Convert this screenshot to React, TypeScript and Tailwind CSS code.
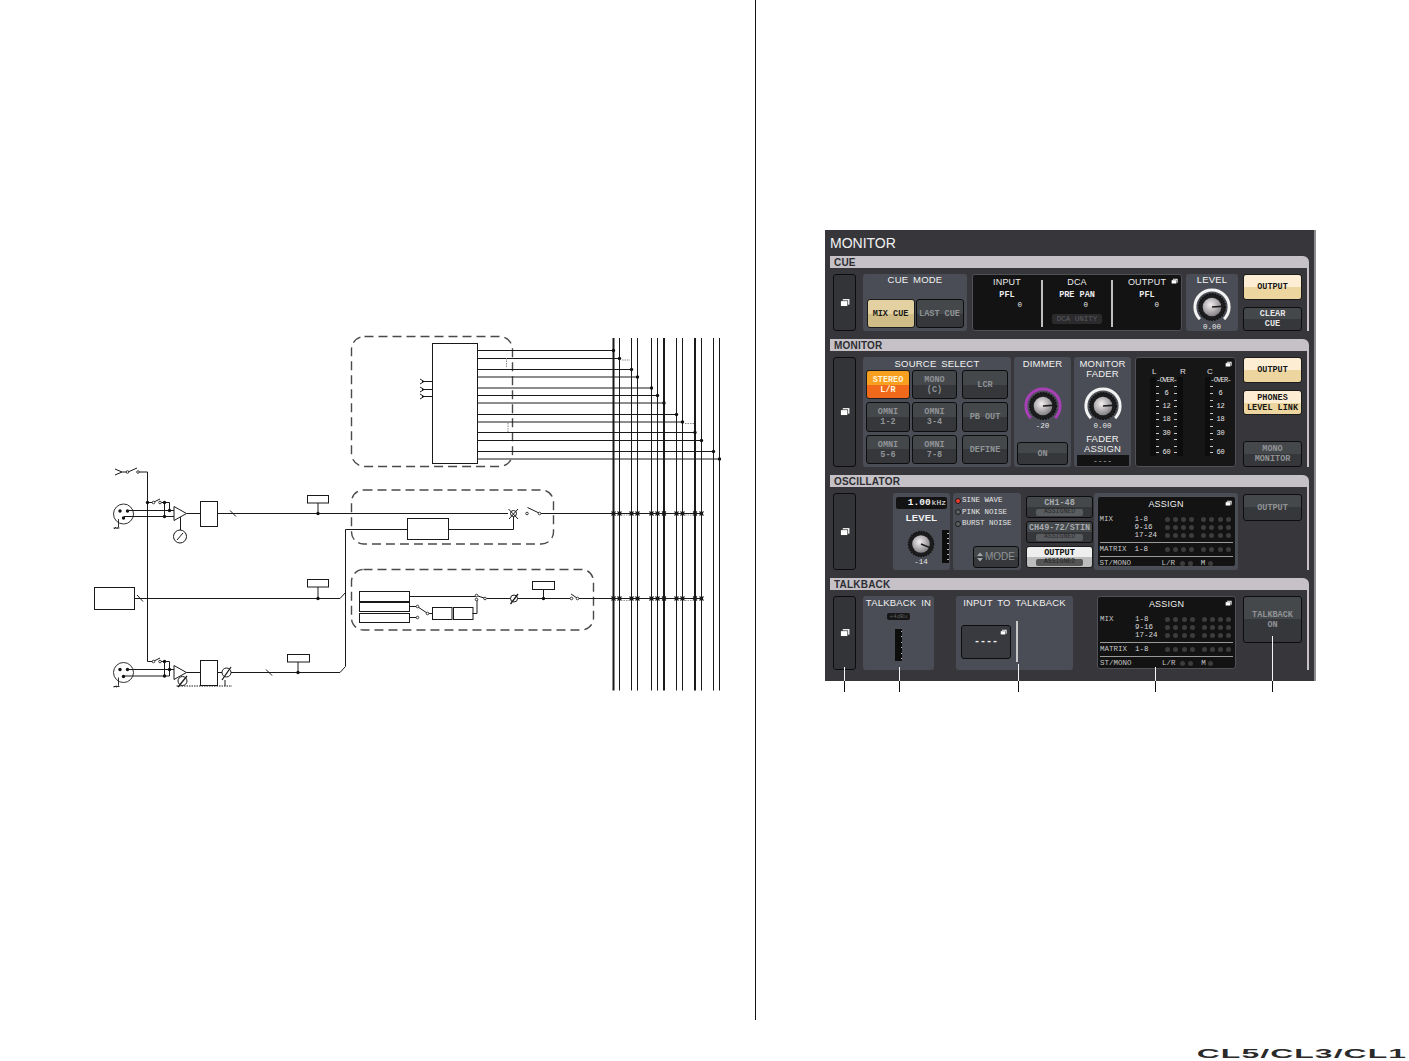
import type { ReactNode } from "react"

const MONO = "font-['Liberation_Mono',monospace]"

const TONES = {
  dark: "border-[#0d0d0d] bg-[linear-gradient(#45484b_50%,#35373a_50%)] text-[#e4e4e4]",
  dim: "border-[#0d0d0d] bg-[linear-gradient(#45484b_50%,#35373a_50%)] text-[#909396]",
  cream: "border-[#1c1c1c] bg-[linear-gradient(#fdeed3_50%,#edd5a0_50%)] text-[#161616]",
  sand: "border-[#1c1c1c] bg-[linear-gradient(#e3d1a1_50%,#cfbc87_50%)] text-[#1a1a1a]",
  orange: "border-[#1c1c1c] bg-[linear-gradient(#f7a01f_50%,#f0691b_50%)] text-[#fff4dc]",
  light: "border-[#1c1c1c] bg-[linear-gradient(#eeeeee_50%,#bdbdbd_50%)] text-[#111111]",
}

function Btn({
  tone = "dim",
  className = "",
  children,
}: {
  tone?: keyof typeof TONES
  className?: string
  children: ReactNode
}) {
  return (
    <div
      className={`flex flex-col items-center justify-center rounded-[3px] border text-[8.5px] leading-[10px] font-bold whitespace-nowrap ${MONO} ${TONES[tone]} ${className}`}
    >
      {children}
    </div>
  )
}

function WindowIcon({ size = 10 }: { size?: number }) {
  return (
    <svg width={size} height={size} viewBox="0 0 9 9" fill="none">
      <rect x="2.5" y="1" width="6" height="5" fill="#ffffff" />
      <rect x="0.5" y="2.5" width="6.5" height="5" fill="#ffffff" stroke="#222" strokeWidth="0.6" />
    </svg>
  )
}

function CornerIcon() {
  return (
    <div className="absolute top-[3px] right-[3px] flex">
      <WindowIcon size={7} />
    </div>
  )
}

function BigBtn() {
  return (
    <div className="flex h-full w-[23px] shrink-0 items-center justify-center rounded-[3px] border border-[#0d0d0d] bg-[#323437]">
      <WindowIcon />
    </div>
  )
}

function Group({ className = "", children }: { className?: string; children: ReactNode }) {
  return (
    <div className={`flex h-full shrink-0 flex-col items-center rounded-[3px] bg-[#4a4d55] ${className}`}>
      {children}
    </div>
  )
}

function Title({ children, className = "" }: { children: ReactNode; className?: string }) {
  return (
    <div className={`text-center text-[9.5px] leading-[10px] tracking-[0.2px] [word-spacing:2px] whitespace-nowrap text-[#f2f2f2] ${className}`}>
      {children}
    </div>
  )
}

function Knob({ id, ring, angle = 0, size = 38 }: { id: string; ring?: string; angle?: number; size?: number }) {
  const rad = (angle * Math.PI) / 180
  return (
    <svg width={size} height={size} viewBox="0 0 38 38" className="shrink-0">
      <defs>
        <radialGradient id={id} cx="0.42" cy="0.38" r="0.7">
          <stop offset="0" stopColor="#f2eff0" />
          <stop offset="0.45" stopColor="#bcb8bb" />
          <stop offset="1" stopColor="#77757a" />
        </radialGradient>
      </defs>
      {ring && (
        <path d="M6.9 31.1 A17.1 17.1 0 1 1 31.1 31.1" fill="none" stroke={ring} strokeWidth="3" />
      )}
      <circle cx="19" cy="19" r="13.2" fill="#1c1c1e" stroke="#111" strokeWidth="1.6" strokeDasharray="1.6 1.2" />
      <circle cx="19" cy="19" r="9.3" fill={`url(#${id})`} />
      <line
        x1="19"
        y1="19"
        x2={19 + 13 * Math.cos(rad)}
        y2={19 + 13 * Math.sin(rad)}
        stroke="#1a1a1a"
        strokeWidth="1.6"
      />
    </svg>
  )
}

function Value({ children, className = "" }: { children: ReactNode; className?: string }) {
  return <div className={`text-[7.5px] leading-[8px] text-[#e8e8e8] ${MONO} ${className}`}>{children}</div>
}

function CueColumn({ name, pfl, pad, last }: { name: string; pfl: string; pad: string; last?: boolean }) {
  return (
    <div className={`flex h-[47px] flex-1 flex-col items-center ${last ? "" : "border-r-2 border-[#bfbfbf]"}`}>
      <div className="-mt-[3px] text-[9px] leading-[10px] tracking-[0.2px] text-[#ececec]">{name}</div>
      <div className={`mt-[3px] text-[8.5px] leading-[10px] font-bold text-[#ececec] ${MONO}`}>{pfl}</div>
      <div className={`w-full text-right ${pad}`}>
        <Value className="mt-[1px]">0</Value>
      </div>
      {name === "DCA" && (
        <div className={`mt-[5px] rounded-[2px] bg-[#2b2b2d] px-[5px] text-[7.5px] leading-[10px] text-[#5c5c60] ${MONO}`}>
          DCA UNITY
        </div>
      )}
    </div>
  )
}

function Section({ title, contentClass, children }: { title: string; contentClass: string; children: ReactNode }) {
  return (
    <div className="w-[479px]">
      <div className="h-[12px] rounded-tr-[6px] bg-[#c5c1c6] pt-[1px] pl-[4px] text-[10px] leading-[12px] font-bold tracking-[0.2px] text-[#2e2e32]">
        {title}
      </div>
      <div className="border-r-2 border-[#c5c1c6] pt-[6px] pl-[3px]">
        <div className={`flex ${contentClass}`}>{children}</div>
      </div>
    </div>
  )
}

function MeterRows({ ticksBothSides }: { ticksBothSides?: boolean }) {
  const rows = ["-OVER-", "", "6", "", "12", "", "18", "", "30", "", "", "60"]
  return (
    <div className="flex w-[21px] flex-col">
      {rows.map((r, i) => (
        <div key={i} className="flex h-[6.8px] items-center justify-between text-[7px] leading-[7px] text-[#e8e8e8]">
          {r === "-OVER-" ? (
            <span className={`w-full text-center tracking-[-0.8px] ${MONO}`}>{r}</span>
          ) : (
            <>
              <span className="h-px w-[3px] bg-[#c8c8c8]" />
              <span className={`tracking-[-0.3px] ${MONO}`}>{r}</span>
              <span className={`h-px w-[3px] ${ticksBothSides ? "bg-[#c8c8c8]" : "bg-transparent"}`} />
            </>
          )}
        </div>
      ))}
    </div>
  )
}

function Dots({ n = 8 }: { n?: number }) {
  return (
    <div className="flex gap-[3.3px]">
      {Array.from({ length: n }).map((_, i) => (
        <span key={i} className={`size-[5px] rounded-full bg-[#3c3c3e] ${n === 8 && i === 4 ? "ml-[3.4px]" : ""}`} />
      ))}
    </div>
  )
}

function AssignRow({ label, sub }: { label: string; sub: string }) {
  return (
    <div className={`flex h-[8px] items-center text-[7.5px] leading-[8px] text-[#c4c4c4] ${MONO}`}>
      <span className="w-[35px] shrink-0">{label}</span>
      <span className="w-[30px] shrink-0 text-[#dcdcdc]">{sub}</span>
      <Dots />
    </div>
  )
}

function Assign({ className = "" }: { className?: string }) {
  return (
    <div className={`relative shrink-0 rounded-[3px] border border-[#4f5157] bg-[#131313] px-[2px] ${className}`}>
      <CornerIcon />
      <div className="pt-[2px] text-center text-[9px] leading-[10px] tracking-[0.2px] text-[#f0f0f0]">ASSIGN</div>
      <div className="mt-[6px]">
        <AssignRow label="MIX" sub="1-8" />
        <AssignRow label="" sub="9-16" />
        <AssignRow label="" sub="17-24" />
      </div>
      <div className="mt-[3px] h-px bg-[#9a9a9a]" />
      <div className="mt-[2px]">
        <AssignRow label="MATRIX" sub="1-8" />
      </div>
      <div className="mt-[3px] h-px bg-[#9a9a9a]" />
      <div className={`mt-[2px] flex h-[8px] items-center text-[7.5px] leading-[8px] text-[#c4c4c4] ${MONO}`}>
        <span className="w-[62px] shrink-0">ST/MONO</span>
        <span className="w-[18px] shrink-0">L/R</span>
        <Dots n={2} />
        <span className="ml-[8px] w-[7px]">M</span>
        <Dots n={1} />
      </div>
    </div>
  )
}

function Wave({ label, on }: { label: string; on?: boolean }) {
  return (
    <div className={`flex h-[11.5px] items-center gap-[1px] text-[7.5px] text-[#e6e6e6] ${MONO}`}>
      <span
        className={`size-[6px] rounded-full border border-[#1c1c1c] ${on ? "bg-[#ef3a2c]" : "bg-[#5c6060]"}`}
      />
      {label}
    </div>
  )
}

function AssignBtn({ name, tone = "dim" }: { name: string; tone?: "dim" | "light" }) {
  const light = tone === "light"
  return (
    <Btn tone={tone} className="h-[22px] w-full">
      <span className={light ? "" : "text-[#a8abae]"}>{name}</span>
      <span
        className={`mt-[1px] rounded-[2px] px-[8px] text-[6.5px] leading-[6.5px] font-normal ${
          light ? "bg-[#555] text-[#222]" : "bg-[#5a5d60] text-[#2a2a2c]"
        }`}
      >
        ASSIGNED
      </span>
    </Btn>
  )
}

function Callout({ className }: { className: string }) {
  return (
    <div className={`absolute flex w-px flex-col ${className}`}>
      <div className="flex-1 bg-[#f4f4f4]" />
      <div className="h-[11px] bg-[#111111]" />
    </div>
  )
}

function MonitorPanel() {
  return (
    <div className="relative h-[451px] w-[491px] border-r-2 border-[#8d8d92] bg-[#37373b] pl-[5px] font-['Liberation_Sans',sans-serif]">
      <div className="flex h-[26px] items-start pt-[5px] text-[14px] leading-[16px] text-[#f2f2f2]">MONITOR</div>

      <Section title="CUE" contentClass="h-[57px]">
        <BigBtn />
        <Group className="ml-[7px] w-[104px] pt-[1px]">
          <Title>CUE MODE</Title>
          <div className="mt-[14px] flex gap-[1px]">
            <Btn tone="sand" className="h-[29px] w-[48px]">MIX CUE</Btn>
            <Btn className="h-[29px] w-[48px]">LAST CUE</Btn>
          </div>
        </Group>
        <div className="relative ml-[5px] flex h-full w-[210px] shrink-0 items-start rounded-[3px] border border-[#4f5157] bg-[#131313] pt-[5px]">
          <CornerIcon />
          <CueColumn name="INPUT" pfl="PFL" pad="pr-[19px]" />
          <CueColumn name="DCA" pfl="PRE PAN" pad="pr-[23px]" />
          <CueColumn name="OUTPUT" pfl="PFL" pad="pr-[22px]" last />
        </div>
        <Group className="ml-[4px] w-[52px] pt-[1px]">
          <Title>LEVEL</Title>
          <div className="mt-[3px]">
            <Knob id="kLevel" ring="#f2f2f2" angle={-4} />
          </div>
          <Value className="-mt-[3px]">0.00</Value>
        </Group>
        <div className="ml-[5px] flex h-full w-[59px] shrink-0 flex-col justify-between">
          <Btn tone="cream" className="h-[26px]">OUTPUT</Btn>
          <Btn tone="dark" className="h-[24px]">
            <span>CLEAR</span>
            <span>CUE</span>
          </Btn>
        </div>
      </Section>

      <div className="mt-[8px]">
        <Section title="MONITOR" contentClass="h-[110px]">
          <BigBtn />
          <Group className="ml-[7px] w-[148px] pt-[2px]">
            <Title>SOURCE SELECT</Title>
            <div className="mt-[1px] grid grid-cols-[44px_45px_49px] grid-rows-[29px_30px_29px] gap-x-[2px] gap-y-[3px]">
              <Btn tone="orange">
                <span>STEREO</span>
                <span>L/R</span>
              </Btn>
              <Btn>
                <span>MONO</span>
                <span>(C)</span>
              </Btn>
              <Btn className="ml-[3px]">LCR</Btn>
              <Btn>
                <span>OMNI</span>
                <span>1-2</span>
              </Btn>
              <Btn>
                <span>OMNI</span>
                <span>3-4</span>
              </Btn>
              <Btn className="ml-[3px]">PB OUT</Btn>
              <Btn>
                <span>OMNI</span>
                <span>5-6</span>
              </Btn>
              <Btn>
                <span>OMNI</span>
                <span>7-8</span>
              </Btn>
              <Btn className="ml-[3px]">DEFINE</Btn>
            </div>
          </Group>
          <Group className="ml-[3px] w-[57px] pt-[2px]">
            <Title>DIMMER</Title>
            <div className="mt-[18px]">
              <Knob id="kDim" ring="#a640b4" angle={-4} />
            </div>
            <Value className="-mt-[3px]">-20</Value>
            <Btn className="mt-[12px] h-[23px] w-[51px]">ON</Btn>
          </Group>
          <Group className="ml-[3px] w-[57px] pt-[2px]">
            <Title>
              MONITOR
              <br />
              FADER
            </Title>
            <div className="mt-[8px]">
              <Knob id="kFader" ring="#f2f2f2" angle={-4} />
            </div>
            <Value className="-mt-[3px]">0.00</Value>
            <Title className="mt-[4px]">
              FADER
              <br />
              ASSIGN
            </Title>
            <div className={`mt-[1px] h-[11px] w-[52px] bg-[#131313] text-center text-[8px] leading-[11px] text-[#bdbdbd] ${MONO}`}>
              ----
            </div>
          </Group>
          <div className="relative ml-[4px] h-full w-[101px] shrink-0 rounded-[3px] border border-[#4f5157] bg-[#161616] pl-[14px]">
            <CornerIcon />
            <div className="flex h-[19px] pt-[9px] text-[8px] leading-[9px] text-[#e0e0e0]">
              <span className="ml-[2px] w-[28px]">L</span>
              <span className="w-[27px]">R</span>
              <span>C</span>
            </div>
            <div className="flex">
              <div className="flex h-[79px]">
                <div className="w-[6px] bg-[#0d0d0d]" />
                <MeterRows ticksBothSides />
                <div className="w-[6px] bg-[#0d0d0d]" />
              </div>
              <div className="ml-[22px] flex h-[79px]">
                <div className="w-[5px] bg-[#0d0d0d]" />
                <MeterRows />
              </div>
            </div>
          </div>
          <div className="ml-[7px] flex h-full w-[59px] shrink-0 flex-col">
            <Btn tone="cream" className="h-[26px]">OUTPUT</Btn>
            <Btn tone="cream" className="mt-[7px] h-[25px]">
              <span>PHONES</span>
              <span>LEVEL LINK</span>
            </Btn>
            <Btn className="mt-auto h-[26px]">
              <span>MONO</span>
              <span>MONITOR</span>
            </Btn>
          </div>
        </Section>
      </div>

      <div className="mt-[8px]">
        <Section title="OSCILLATOR" contentClass="h-[77px]">
          <BigBtn />
          <Group className="ml-[37px] w-[57px] pt-[4px]">
            <div className={`flex h-[12px] w-[51px] items-center justify-end gap-[1px] rounded-[2px] bg-[#131313] pr-[1px] font-bold text-[#f4f4f4] ${MONO}`}>
              <span className="text-[9.5px] leading-[12px]">1.00</span>
              <span className="text-[8px] leading-[12px] font-normal">kHz</span>
            </div>
            <Title className="mt-[4px] font-bold">LEVEL</Title>
            <div className="mt-[3px] flex w-full items-end pl-[10px]">
              <div className="flex flex-col items-center">
                <Knob id="kOsc" angle={22} size={36} />
                <Value className="-mt-[4px]">-14</Value>
              </div>
              <div className="mb-[3px] ml-[3px] flex h-[33px] w-[7px] flex-col items-end justify-between bg-[#0d0d0d] py-[3px]">
                {[0, 1, 2, 3, 4, 5].map((t) => (
                  <span key={t} className="h-px w-[2px] bg-[#bcbcbc]" />
                ))}
              </div>
            </div>
          </Group>
          <Group className="ml-[3px] w-[68px] items-start pt-[2px] pl-[2px]">
            <Wave label="SINE WAVE" on />
            <Wave label="PINK NOISE" />
            <Wave label="BURST NOISE" />
            <Btn tone="dim" className="mt-[16px] ml-[18px] h-[22px] w-[46px] !flex-row gap-[2px] font-['Liberation_Sans',sans-serif]! text-[10px]! font-normal!">
              <svg width="6" height="10" viewBox="0 0 6 10" fill="#a4a7aa">
                <path d="M3 0.5 L6 4 H0 Z M3 9.5 L6 6 H0 Z" />
              </svg>
              MODE
            </Btn>
          </Group>
          <div className="ml-[5px] flex h-full w-[67px] shrink-0 flex-col gap-[3px] pt-[3px]">
            <AssignBtn name="CH1-48" />
            <AssignBtn name="CH49-72/STIN" />
            <AssignBtn name="OUTPUT" tone="light" />
          </div>
          <div className="ml-[1px] flex h-full w-[144px] shrink-0 items-center justify-center rounded-[3px] bg-[#4a4d55]">
            <Assign className="h-[71px] w-[139px]" />
          </div>
          <div className="ml-[5px] w-[59px] shrink-0 pt-[1px]">
            <Btn className="h-[27px]">OUTPUT</Btn>
          </div>
        </Section>
      </div>

      <div className="mt-[8px]">
        <Section title="TALKBACK" contentClass="h-[74px]">
          <BigBtn />
          <Group className="ml-[7px] w-[71px] pt-[2px]">
            <Title>TALKBACK IN</Title>
            <div className={`mt-[5px] h-[7px] w-[23px] rounded-[2px] bg-[#161616] text-center text-[6px] leading-[7px] text-[#5a5a5e] ${MONO}`}>
              +4dBu
            </div>
            <div className="mt-[9px] flex h-[32px] w-[7px] flex-col items-end justify-between bg-[#0d0d0d] py-[2px]">
              {[0, 1, 2, 3, 4, 5].map((t) => (
                <span key={t} className="h-px w-[1px] bg-[#bcbcbc]" />
              ))}
            </div>
          </Group>
          <Group className="ml-[22px] w-[117px] items-start pt-[2px]">
            <Title className="w-full">INPUT TO TALKBACK</Title>
            <div className="mt-[13px] flex items-center pl-[5px]">
              <div className="relative flex h-[34px] w-[50px] items-center justify-center rounded-[3px] border border-[#0d0d0d] bg-[#383a3f] text-[10px] text-[#f0f0f0]">
                <CornerIcon />
                <span className={`font-bold ${MONO}`}>----</span>
              </div>
              <div className="ml-[5px] h-[41px] w-[2px] bg-[#c8c8c8]" />
            </div>
          </Group>
          <Assign className="ml-[24px] h-[73px] w-[139px]" />
          <div className="ml-[7px] w-[59px] shrink-0">
            <Btn className="h-[47px]">
              <span>TALKBACK</span>
              <span>ON</span>
            </Btn>
          </div>
        </Section>
      </div>

      <Callout className="top-[437px] left-[19px] h-[25px]" />
      <Callout className="top-[437px] left-[74px] h-[25px]" />
      <Callout className="top-[434px] left-[193px] h-[28px]" />
      <Callout className="top-[437px] left-[330px] h-[25px]" />
      <Callout className="top-[406px] left-[447px] h-[56px]" />
    </div>
  )
}

const BUSES = [613.5, 619.5, 631.5, 637.5, 651.5, 657.5, 664, 676.5, 682.5, 695, 701.5, 713.5, 719.5]
const THICK = [613.5, 664, 695]
const SENDS = [350.5, 358.5, 369.5, 377, 388, 395.5, 403, 414.5, 422, 432.5, 440.5, 451.5, 459]

function Node({ x, y }: { x: number; y: number }) {
  return <circle cx={x} cy={y} r="1.7" fill="#111" stroke="none" />
}

function Pin({ x, y }: { x: number; y: number }) {
  return <circle cx={x} cy={y} r="1.3" fill="#fff" stroke="#111" strokeWidth="0.8" />
}

function Xlr({ x, y }: { x: number; y: number }) {
  return (
    <g>
      <circle cx={x} cy={y} r="10" fill="#fff" strokeWidth="0.9" />
      <Node x={x - 3.5} y={y - 3} />
      <Node x={x + 4} y={y - 3} />
      <Node x={x} y={y + 4} />
      <path d={`M${x - 5} ${y + 5} V${y + 13} M${x - 10} ${y + 14} h6 M${x - 9.5} ${y + 15} l2 -2 M${x - 7} ${y + 15} l2 -2`} strokeWidth="0.9" />
    </g>
  )
}

function Diagram() {
  return (
    <svg
      width="640"
      height="370"
      viewBox="90 330 640 370"
      fill="none"
      stroke="#1a1a1a"
      strokeWidth="1"
      className="mt-[330px] ml-[90px]"
    >
      {/* bus verticals */}
      {BUSES.map((x) => (
        <line key={x} x1={x} y1="338" x2={x} y2="690.5" strokeWidth={THICK.includes(x) ? 2 : 1} />
      ))}

      {/* top block with sends */}
      <rect x="351.5" y="336.5" width="161" height="130" rx="13" stroke="#4a4a4a" strokeWidth="1.4" strokeDasharray="9 5" />
      <rect x="432.5" y="343.5" width="45" height="120" fill="#fff" />
      {SENDS.map((y, i) => (
        <g key={y}>
          <line x1="477.5" y1={y} x2={BUSES[i]} y2={y} />
          <Node x={BUSES[i]} y={y} />
        </g>
      ))}
      {[381.5, 389.5, 396.5].map((y) => (
        <path key={y} d={`M420 ${y - 2.5} l4 2.5 l-4 2.5 M422 ${y} H432.5`} />
      ))}
      <g stroke="#888" strokeDasharray="1.5 1">
        <path d="M622 360 H630 M685 423.5 H694 M506.5 358 V368 M508 423 V432" />
      </g>

      {/* second and third dashed groups */}
      <rect x="351.5" y="490" width="202" height="54" rx="12" stroke="#4a4a4a" strokeWidth="1.4" strokeDasharray="9 5" />
      <rect x="351.5" y="569.5" width="242" height="60.5" rx="12" stroke="#4a4a4a" strokeWidth="1.4" strokeDasharray="9 5" />

      {/* top channel */}
      <path d="M115 469 l7 3 l-7 3 M122 472 H127 M138 472 H147.5 V661.5" />
      <path d="M128 472 l9 -4" />
      <Pin x={127.5} y={472} />
      <Pin x={138} y={472} />
      <Xlr x={123.5} y={514} />
      <path d="M127 510.5 H169.5 V502.5 H160 M124 516.5 H174 M164.5 502.5 V516.5 M169.5 510.5 H174" />
      <path d="M147.5 502.5 H153 M154 502 l6 -3" />
      <Node x={147.5} y={502.5} />
      <Pin x={153.5} y={502.5} />
      <Pin x={160} y={502.5} />
      <Node x={164.5} y={502.5} />
      <Node x={169.5} y={510.5} />
      <Node x={164.5} y={516.5} />
      <path d="M174 506.5 V520.5 L186.5 513.5 Z M186.5 513.5 H200.5 M180.5 517 V530" />
      <circle cx="180" cy="536.5" r="6.5" />
      <path d="M177 540 L183 533" />
      <rect x="200.5" y="501.5" width="17" height="25" />
      <path d="M217.5 513.5 H508 M230 510.5 l6 6" />
      <rect x="307.5" y="495.5" width="21" height="7.5" />
      <path d="M318 503 V513.5" />
      <Node x={318} y={513.5} />

      <circle cx="513.5" cy="513.5" r="3" />
      <path d="M508.5 509 L518 519 M518 509 L509 519" />
      <rect x="407.5" y="518.5" width="41" height="21" />
      <path d="M345.5 666.5 V529.5 H407.5 M448.5 529.5 H513.5 V516.5" />
      <path d="M527.5 507.5 L539 513" />
      <Pin x={527} y={513.5} />
      <Pin x={539.5} y={513.5} />
      <path d="M541 513.5 H703" />

      {/* middle line */}
      <rect x="94.5" y="587.5" width="40" height="22" />
      <path d="M134.5 598.5 H340 L345.5 592.5 M137 595 l6 6.5" />
      <rect x="307.5" y="579.5" width="21" height="7.5" />
      <path d="M318 587 V598.5" />
      <Node x={318} y={598.5} />

      {/* third group contents */}
      <rect x="359.5" y="591.5" width="50" height="10" />
      <rect x="359.5" y="602.5" width="50" height="9" />
      <rect x="359.5" y="613.5" width="50" height="9" />
      <path d="M359.5 602 H409.5" strokeWidth="1.6" />
      <path d="M409.5 596.5 H476.5 M477 599 V613.5 H472.5 M409.5 606.5 H416 M409.5 617.5 H416 M418 607 L427 613 M428.5 613.5 H432.5" />
      <Pin x={417.5} y={606.5} />
      <Pin x={417.5} y={617.5} />
      <Pin x={427.5} y={613.5} />
      <rect x="432.5" y="607.5" width="19.5" height="12" />
      <rect x="453.5" y="607.5" width="19.5" height="12" />
      <Pin x={476.5} y={595.5} />
      <Pin x={476.5} y={599.5} />
      <path d="M478 596 L484 598" />
      <Pin x={485} y={598.5} />
      <path d="M486.5 598.5 H570 M579 598.5 H703" />
      <circle cx="514" cy="598.5" r="3.5" fill="#fff" />
      <path d="M510.5 604 L518 594" strokeWidth="1.3" />
      <rect x="532.5" y="581.5" width="22" height="8" />
      <path d="M543.5 589.5 V598.5 M571 594 L577 598" />
      <Node x={543.5} y={598.5} />
      <Pin x={571.5} y={598.5} />
      <Pin x={577.5} y={598.5} />

      {/* crossing marks on the bus */}
      {BUSES.slice(0, 11).map((x) =>
        [513.5, 598.5].map((y) => (
          <path key={`${x}-${y}`} d={`M${x - 2} ${y - 2} l4 4 M${x + 2} ${y - 2} l-4 4`} strokeWidth="1.1" />
        )),
      )}
      <g stroke="#999" strokeDasharray="1.5 1">
        <path d="M621 515 H630 M685 515 H694 M621 600.5 H630 M685 600.5 H694" />
      </g>

      {/* bottom channel */}
      <Xlr x={123.5} y={672.5} />
      <path d="M127 669.5 H174 M124 676 H169.5 V661.5 H160 M164.5 661.5 V676" />
      <path d="M147.5 661.5 H153 M154 661 l6 -3" />
      <Pin x={153.5} y={661.5} />
      <Pin x={160} y={661.5} />
      <Node x={164.5} y={661.5} />
      <Node x={169.5} y={669.5} />
      <Node x={164.5} y={676} />
      <path d="M174 665.5 V679.5 L186.5 672.5 Z M186.5 672.5 H200.5" />
      <circle cx="182.5" cy="681" r="4.5" fill="#fff" />
      <path d="M178 687 L187 676" strokeWidth="1.3" />
      <rect x="200.5" y="660.5" width="17" height="25" />
      <path d="M176.5 686 H232" strokeDasharray="1.5 1" />
      <path d="M225 680 V686" />
      <path d="M217.5 672.5 H222 M231 672.5 H340 L345.5 666.5 M266 669.5 l6 6" />
      <circle cx="226.5" cy="672.5" r="4.5" />
      <path d="M222 680 L231 667" strokeWidth="1.3" />
      <rect x="287.5" y="654.5" width="22" height="7.5" />
      <path d="M298 662 V672.5" />
      <Node x={298} y={672.5} />
    </svg>
  )
}

export default function App() {
  return (
    <div className="flex h-[1061px] w-[1409px] flex-col bg-white">
      <div className="flex h-[1020px]">
        <div className="h-full w-[756px] shrink-0 border-r border-[#111111]">
          <Diagram />
        </div>
        <div className="pt-[230px] pl-[69px]">
          <MonitorPanel />
        </div>
      </div>
      <div className="flex flex-1 justify-end pt-[28px] pr-[2px] font-['Liberation_Sans',sans-serif]">
        <span className="origin-right scale-x-[2.66] text-[12px] leading-[12px] font-bold tracking-[0.4px] whitespace-nowrap text-[#2a2a2a]">
          CL5/CL3/CL1
        </span>
      </div>
    </div>
  )
}
